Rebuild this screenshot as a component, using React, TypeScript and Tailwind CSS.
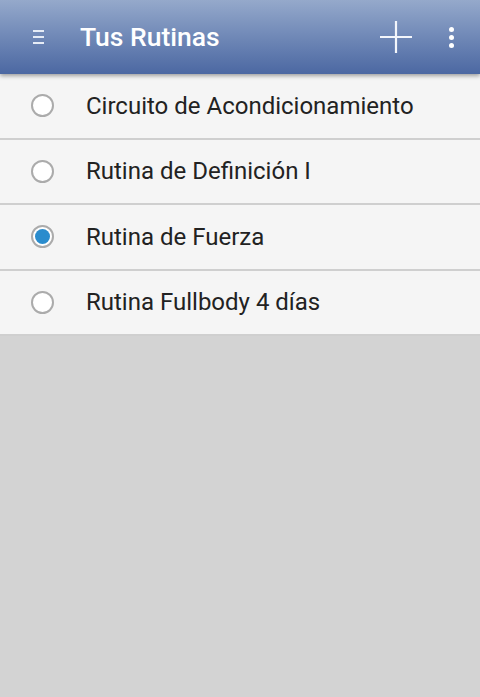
import { useState } from "react";

const routines = [
  "Circuito de Acondicionamiento",
  "Rutina de Definición I",
  "Rutina de Fuerza",
  "Rutina Fullbody 4 días",
];

function Radio({ checked }: { checked: boolean }) {
  return (
    <span className="grid size-[23px] shrink-0 place-items-center rounded-full border-2 border-[#ababab] bg-white">
      {checked && <span className="size-[15px] rounded-full bg-[#2a8ccd]" />}
    </span>
  );
}

export default function App() {
  const [selected, setSelected] = useState(2);

  return (
    <div className="flex h-[697px] w-[480px] flex-col bg-[#d3d3d3] font-['Roboto',sans-serif]">
      <header className="relative z-10 flex h-[74px] shrink-0 items-center bg-gradient-to-b from-[#95a9cb] to-[#4c68a2] shadow-[0_2px_4px_rgba(0,0,0,0.35)]">
        <button className="ml-[33px] flex w-[11px] flex-col gap-[4px]" aria-label="Menú">
          <span className="h-[2px] w-[11px] bg-[#e6ecf6]" />
          <span className="h-[2px] w-[11px] bg-[#e6ecf6]" />
          <span className="h-[2px] w-[11px] bg-[#e6ecf6]" />
        </button>
        <h1 className="ml-[36px] text-[26.5px] font-medium text-white">Tus Rutinas</h1>
        <button className="ml-auto mr-[36px]" aria-label="Añadir">
          <svg width="34" height="34" viewBox="0 0 34 34">
            <path d="M17 1v32M1 17h32" stroke="#f3f6fb" strokeWidth="2.2" />
          </svg>
        </button>
        <button className="mr-[26px] flex flex-col gap-[3px]" aria-label="Más">
          <span className="size-[5px] rounded-full bg-white" />
          <span className="size-[5px] rounded-full bg-white" />
          <span className="size-[5px] rounded-full bg-white" />
        </button>
      </header>

      <ul className="bg-[#f5f5f5]">
        {routines.map((name, i) => (
          <li
            key={name}
            onClick={() => setSelected(i)}
            className="flex h-[65.5px] cursor-pointer items-center border-b-2 border-[#cfcfcf] pl-[31px]"
          >
            <Radio checked={selected === i} />
            <span className="ml-[32px] text-[24px] text-[#222]">{name}</span>
          </li>
        ))}
      </ul>
    </div>
  );
}
